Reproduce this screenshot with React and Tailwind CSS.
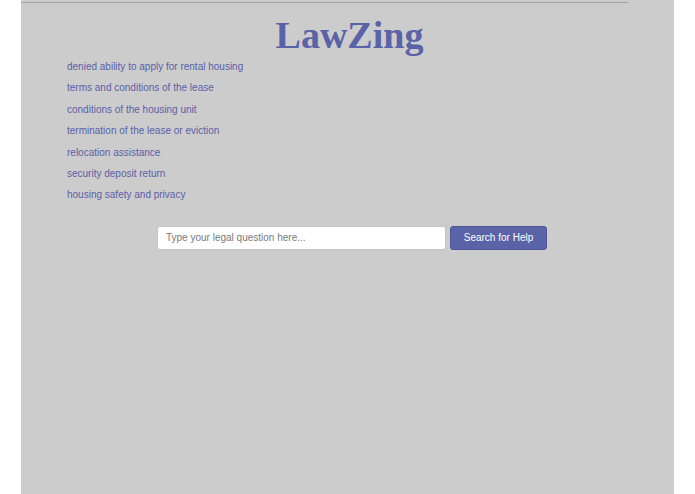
const topics = [
  'denied ability to apply for rental housing',
  'terms and conditions of the lease',
  'conditions of the housing unit',
  'termination of the lease or eviction',
  'relocation assistance',
  'security deposit return',
  'housing safety and privacy'
];

export default function App() {
  return (
    <div className="h-[494px] w-[695px] overflow-hidden bg-white font-['Liberation_Sans',Arial,sans-serif]">
      <div className="ml-[21px] h-full w-[653px] bg-[#cccccc] pt-[2px]">
        <div className="h-px w-[607px] bg-[#a3a3a3]" />
        <h1 className="mt-[10px] pl-[4px] text-center font-['Liberation_Serif','Times_New_Roman',serif] text-[38px] font-bold leading-[44px] text-[#5a63a8]">
          LawZing
        </h1>
        <ul className="ml-[46px] -mt-[1px] flex flex-col">
          {topics.map((t) => (
            <li key={t} className="h-[21.4px] text-[10px] leading-[21.4px] text-[#5a5fa8]">
              <a href="#">{t}</a>
            </li>
          ))}
        </ul>
        <div className="mt-[20px] flex justify-center gap-[4px] pl-[9px]">
          <input
            type="text"
            placeholder="Type your legal question here..."
            className="h-[24px] w-[289px] rounded-[3px] border border-[#c4c4c4] bg-white px-[8px] text-[10px] text-[#333] placeholder:text-[#7a7a7a] outline-none"
          />
          <button className="h-[24px] w-[97px] rounded-[3px] border border-[#4d5596] bg-[#5b63a8] text-[10px] text-white">
            Search for Help
          </button>
        </div>
      </div>
    </div>
  );
}
